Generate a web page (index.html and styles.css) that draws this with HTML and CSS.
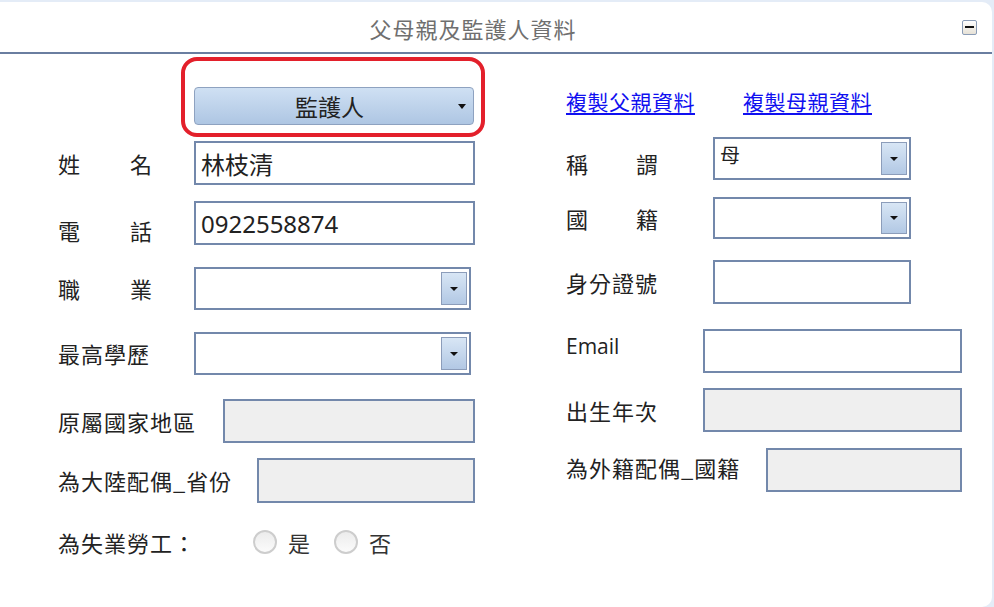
FILE: index.html
```
<!DOCTYPE html>
<html lang="zh-Hant">
<head>
<meta charset="utf-8">
<title>父母親及監護人資料</title>
<link rel="stylesheet" href="styles.css">
</head>
<body>
<div class="panel">
  <div class="header">
    <div class="title">父母親及監護人資料</div>
    <span class="collapse" aria-label="collapse"></span>
  </div>
  <div class="content">
    <div class="col col-left">
      <div class="highlight">
        <div class="guardian"><span class="g-text">監護人</span><span class="g-arrow"></span></div>
      </div>
      <div class="row r1">
        <span class="lbl w136"><span class="spread s94"><span>姓</span><span>名</span></span></span>
        <input class="field w281" type="text" value="林枝清">
      </div>
      <div class="row r2">
        <span class="lbl w136 low7"><span class="spread s94"><span>電</span><span>話</span></span></span>
        <input class="field w281" type="text" value="0922558874">
      </div>
      <div class="row r3">
        <span class="lbl w136"><span class="spread s94"><span>職</span><span>業</span></span></span>
        <div class="select w277"><span class="sel-text"></span><span class="dd"><span class="tri"></span></span></div>
      </div>
      <div class="row r4">
        <span class="lbl w136">最高學歷</span>
        <div class="select w277"><span class="sel-text"></span><span class="dd"><span class="tri"></span></span></div>
      </div>
      <div class="row r5">
        <span class="lbl w165">原屬國家地區</span>
        <input class="field disabled w252" type="text" value="" disabled>
      </div>
      <div class="row r6">
        <span class="lbl w199">為大陸配偶_省份</span>
        <input class="field disabled w218" type="text" value="" disabled>
      </div>
      <div class="row r7">
        <span class="lbl w195">為失業勞工：</span>
        <label class="radio"><span class="circle"></span><span class="rtext">是</span></label>
        <label class="radio r-no"><span class="circle"></span><span class="rtext">否</span></label>
      </div>
    </div>
    <div class="col col-right">
      <div class="links">
        <a href="#" class="link">複製父親資料</a>
        <a href="#" class="link">複製母親資料</a>
      </div>
      <div class="row q1">
        <span class="lbl w147 low10"><span class="spread s92"><span>稱</span><span>謂</span></span></span>
        <div class="select w198"><span class="sel-text">母</span><span class="dd"><span class="tri"></span></span></div>
      </div>
      <div class="row q2">
        <span class="lbl w147"><span class="spread s92"><span>國</span><span>籍</span></span></span>
        <div class="select w198"><span class="sel-text"></span><span class="dd"><span class="tri"></span></span></div>
      </div>
      <div class="row q3">
        <span class="lbl w147">身分證號</span>
        <input class="field w198" type="text" value="">
      </div>
      <div class="row q4">
        <span class="lbl w137 high8 latin">Email</span>
        <input class="field w259" type="text" value="">
      </div>
      <div class="row q5">
        <span class="lbl w137">出生年次</span>
        <input class="field disabled w259" type="text" value="" disabled>
      </div>
      <div class="row q6">
        <span class="lbl w200 high6">為外籍配偶_國籍</span>
        <input class="field disabled w196" type="text" value="" disabled>
      </div>
    </div>
  </div>
</div>
</body>
</html>
```

FILE: styles.css
```
* { box-sizing: border-box; }
html, body { margin: 0; padding: 0; }
body {
  background: #e4ecf7;
  width: 994px;
  height: 607px;
  overflow: hidden;
  font-family: "Noto Sans", "Noto Sans CJK TC", sans-serif;
  color: #222;
}
.panel {
  margin: 2px 2px 0 0;
  height: 605px;
  background: #fff;
  border-radius: 0 10px 10px 0;
}
.header {
  height: 52px;
  border-bottom: 2px solid #6a7ea0;
  display: flex;
  align-items: center;
  padding-right: 15px;
}
.title {
  flex: 1;
  text-align: center;
  font-family: "Noto Sans CJK TC", sans-serif;
  font-size: 22px;
  letter-spacing: 1px;
  color: #6f6f6f;
  padding-top: 2px;
}
.collapse {
  width: 15px;
  height: 15px;
  margin-left: 16px;
  border: 1px solid #8a9cb6;
  border-radius: 2px;
  background: linear-gradient(#ffffff, #e6e1d6);
  display: flex;
  align-items: center;
  justify-content: center;
}
.collapse::before {
  content: "";
  width: 9px;
  height: 2px;
  background: #111;
}
.content {
  display: flex;
}
.col-left {
  width: 566px;
  padding-left: 58px;
}
.col-right {
  flex: 1;
}
.highlight {
  margin-top: 3px;
  margin-left: 123px;
  width: 304px;
  height: 80px;
  border: 4px solid #e3202b;
  border-radius: 16px;
  padding: 26px 7px 0 9px;
}
.guardian {
  height: 38px;
  width: 280px;
  border: 1px solid #8ea2c0;
  border-radius: 4px;
  background: linear-gradient(#cfe0f3, #aec6e3);
  display: flex;
  align-items: center;
}
.g-text {
  flex: 1;
  text-align: center;
  font-family: "Noto Sans CJK TC", sans-serif;
  font-size: 23px;
  color: #222;
  padding-left: 6px;
}
.g-arrow {
  width: 0; height: 0;
  border-left: 4px solid transparent;
  border-right: 4px solid transparent;
  border-top: 5px solid #111;
  margin-right: 7px;
}
.row {
  display: flex;
  align-items: center;
}
.lbl {
  flex: none;
  font-family: "Noto Sans CJK TC", sans-serif;
  font-size: 22px;
  letter-spacing: 1px;
  line-height: 1.2;
  color: #222;
  white-space: nowrap;
}
.lbl.latin {
  font-family: "Open Sans", "Noto Sans", sans-serif;
  letter-spacing: 0;
  font-size: 21px;
}
.spread { display: flex; justify-content: space-between; letter-spacing: 0; }
.s94 { width: 94px; }
.s92 { width: 92px; }
.w136 { width: 136px; }
.w137 { width: 137px; }
.w147 { width: 147px; }
.w165 { width: 165px; }
.w195 { width: 195px; }
.w199 { width: 199px; }
.w200 { width: 200px; }
.low7 { margin-top: 14px; }
.low10 { margin-top: 10px; }
.high8 { margin-bottom: 8px; }
.high6 { margin-bottom: 6px; }

.field {
  flex: none;
  height: 100%;
  border: 2px solid #7388ab;
  background: #fff;
  padding: 0 5px;
  font-family: "Noto Sans", "Noto Sans CJK TC", sans-serif;
  font-size: 24px;
  color: #222;
  outline: none;
}
.field.disabled { background: #efefef; }
.w281 { width: 281px; }
.w277 { width: 277px; }
.w252 { width: 252px; }
.w218 { width: 218px; }
.w198 { width: 198px; }
.w259 { width: 259px; }
.w196 { width: 196px; }

.select {
  flex: none;
  height: 100%;
  border: 2px solid #7388ab;
  background: #fff;
  display: flex;
  justify-content: space-between;
  padding: 3px 2px 3px 5px;
}
.sel-text {
  font-family: "Noto Sans CJK TC", sans-serif;
  font-size: 20px;
  line-height: 22px;
  padding-top: 2px;
  color: #222;
}
.dd {
  width: 26px;
  border: 1px solid #8c9dba;
  background: linear-gradient(#d8e6f5, #b2c8e4);
  display: flex;
  align-items: center;
  justify-content: center;
}
.tri {
  width: 0; height: 0;
  border-left: 4px solid transparent;
  border-right: 4px solid transparent;
  border-top: 4px solid #111;
}

.r1 { margin-top: 4px; height: 44px; }
.r2 { margin-top: 16px; height: 44px; }
.r3 { margin-top: 22px; height: 43px; }
.r4 { margin-top: 22px; height: 43px; }
.r5 { margin-top: 24px; height: 44px; }
.r6 { margin-top: 15px; height: 45px; }
.r7 { margin-top: 24px; height: 30px; }

.radio {
  display: flex;
  align-items: center;
}
.r-no { margin-left: 24px; }
.circle {
  width: 24px;
  height: 24px;
  border-radius: 50%;
  border: 2px solid #cdcdcd;
  background: linear-gradient(#ececec, #fbfbfb);
}
.rtext {
  margin-left: 11px;
  font-family: "Noto Sans CJK TC", sans-serif;
  font-size: 22px;
  color: #333;
}

.links {
  margin-top: 32px;
  height: 30px;
  display: flex;
  align-items: center;
  gap: 48px;
}
.link {
  font-family: "Noto Sans CJK TC", sans-serif;
  font-size: 21px;
  letter-spacing: 0.5px;
  color: #1010f0;
  text-decoration: underline;
  text-underline-offset: 3px;
}
.q1 { margin-top: 21px; height: 43px; }
.q2 { margin-top: 17px; height: 42px; }
.q3 { margin-top: 21px; height: 44px; }
.q4 { margin-top: 25px; height: 44px; }
.q5 { margin-top: 15px; height: 44px; }
.q6 { margin-top: 16px; height: 44px; }
```
